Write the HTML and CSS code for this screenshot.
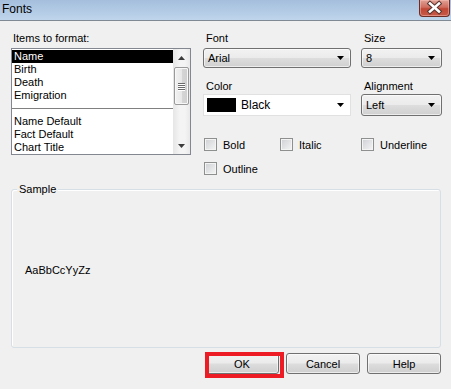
FILE: index.html
```html
<!DOCTYPE html>
<html>
<head>
    <meta charset="utf-8">
    <title>Fonts</title>
    <link rel="stylesheet" href="styles.css">
</head>
<body>
    <div class="window">
        <div class="titlebar">
            <span class="title">Fonts</span>
            <span class="close">
                <svg width="31" height="17" viewBox="0 0 31 17">
                    <path d="M11 4.5 L20 12.5 M20 4.5 L11 12.5" stroke="#5a3430" stroke-width="4.6" stroke-linecap="square"/>
                    <path d="M11 4.5 L20 12.5 M20 4.5 L11 12.5" stroke="#fff" stroke-width="2.6" stroke-linecap="square"/>
                </svg>
            </span>
        </div>

        <div class="main">
            <div class="top">
                <div class="items">
                    <div class="label">Items to format:</div>
                    <div class="listbox">
                        <ul class="list">
                            <li class="selected">Name</li>
                            <li>Birth</li>
                            <li>Death</li>
                            <li>Emigration</li>
                            <li class="sep"><span></span></li>
                            <li>Name Default</li>
                            <li>Fact Default</li>
                            <li>Chart Title</li>
                        </ul>
                        <div class="scrollbar">
                            <div class="sb-btn">
                                <svg width="7" height="4" viewBox="0 0 7 4"><path d="M3.5 0 L7 4 L0 4 Z" fill="#3c3c3c"/></svg>
                            </div>
                            <div class="sb-thumb">
                                <span></span><span></span><span></span><span></span>
                            </div>
                            <div class="sb-track"></div>
                            <div class="sb-btn">
                                <svg width="7" height="4" viewBox="0 0 7 4"><path d="M0 0 L7 0 L3.5 4 Z" fill="#3c3c3c"/></svg>
                            </div>
                        </div>
                    </div>
                </div>

                <div class="controls">
                    <div class="fields">
                        <div class="field">
                            <div class="label">Font</div>
                            <div class="combo">
                                <span>Arial</span>
                                <svg width="7" height="4" viewBox="0 0 7 4"><path d="M0 0 L7 0 L3.5 4 Z" fill="#000"/></svg>
                            </div>
                        </div>
                        <div class="field">
                            <div class="label">Size</div>
                            <div class="combo">
                                <span>8</span>
                                <svg width="7" height="4" viewBox="0 0 7 4"><path d="M0 0 L7 0 L3.5 4 Z" fill="#000"/></svg>
                            </div>
                        </div>
                        <div class="field">
                            <div class="label">Color</div>
                            <div class="combo flat">
                                <span class="swatch"></span>
                                <span class="color-name">Black</span>
                                <svg width="7" height="4" viewBox="0 0 7 4"><path d="M0 0 L7 0 L3.5 4 Z" fill="#000"/></svg>
                            </div>
                        </div>
                        <div class="field">
                            <div class="label">Alignment</div>
                            <div class="combo tall">
                                <span>Left</span>
                                <svg width="7" height="4" viewBox="0 0 7 4"><path d="M0 0 L7 0 L3.5 4 Z" fill="#000"/></svg>
                            </div>
                        </div>
                    </div>

                    <div class="checks">
                        <label class="check"><span class="box"></span>Bold</label>
                        <label class="check"><span class="box"></span>Italic</label>
                        <label class="check"><span class="box"></span>Underline</label>
                        <label class="check"><span class="box"></span>Outline</label>
                    </div>
                </div>
            </div>

            <div class="sample">
                <span class="legend">Sample</span>
                <span class="sample-text">AaBbCcYyZz</span>
            </div>

            <div class="buttons">
                <button class="btn ok">OK</button>
                <button class="btn">Cancel</button>
                <button class="btn">Help</button>
            </div>
        </div>
    </div>
</body>
</html>
```

FILE: styles.css
```css
*, *::before, *::after {
    box-sizing: border-box;
}

body {
    margin: 0;
    background: #f0f0f0;
    font-family: "Liberation Sans", Arial, sans-serif;
    font-size: 11px;
    color: #000;
}

.window {
    width: 451px;
    height: 389px;
    overflow: hidden;
}

/* title bar */
.titlebar {
    height: 21px;
    display: flex;
    justify-content: space-between;
    align-items: flex-start;
    background: linear-gradient(#a4bedc, #bfd5ec);
    border-bottom: 1px solid #808a94;
}

.title {
    font-size: 12px;
    line-height: 18px;
    padding-left: 2px;
    color: #000;
}

.close {
    width: 31px;
    height: 17px;
    margin-right: 1px;
    display: block;
    border: 1px solid #6d2d27;
    border-top: none;
    border-radius: 0 0 4px 4px;
    background: linear-gradient(#e1a196, #cf6d5f 45%, #c04634 55%, #c65a49);
    box-shadow: inset 0 0 0 1px rgba(255, 200, 190, 0.45);
    overflow: hidden;
}

.close svg {
    display: block;
    margin: -1px 0 0 -1px;
}

/* main area */
.main {
    padding: 10px 10px 0 11px;
}

.label {
    line-height: 14px;
    height: 14px;
    margin-bottom: 3px;
    padding-left: 2px;
}

.top {
    display: flex;
    height: 144px;
}

.items {
    width: 180px;
}

.listbox {
    height: 107px;
    border: 1px solid #828790;
    background: #fff;
    display: flex;
    padding-top: 1px;
}

.list {
    list-style: none;
    margin: 0;
    padding: 0;
    width: 161px;
}

.list li {
    height: 13px;
    line-height: 13px;
    padding-left: 2px;
    white-space: nowrap;
}

.list li.selected {
    background: #000;
    color: #fff;
}

.list li.sep {
    display: flex;
    align-items: center;
    padding: 0;
}

.list li.sep span {
    display: block;
    width: 100%;
    height: 1px;
    background: #808080;
}

.scrollbar {
    width: 17px;
    margin-top: -1px;
    display: flex;
    flex-direction: column;
    background: linear-gradient(90deg, #e6e6e6, #f4f4f4 40%, #f4f4f4 70%, #e9e9e9);
}

.sb-btn {
    height: 17px;
    display: flex;
    align-items: center;
    justify-content: center;
}

.sb-thumb {
    height: 38px;
    margin: 1px 1px 0 1px;
    border: 1px solid #9a9a9a;
    border-radius: 2px;
    background: linear-gradient(90deg, #f2f2f2, #e8e8e8 50%, #d6d6d6 51%, #cfcfcf);
    box-shadow: inset 0 0 0 1px #f8f8f8;
    display: flex;
    flex-direction: column;
    align-items: center;
    justify-content: center;
    gap: 1px;
}

.sb-thumb span {
    display: block;
    width: 7px;
    height: 1px;
    background: #6b6b6b;
    box-shadow: 0 1px 0 #fff;
}

.sb-track {
    flex: 1;
}

/* right column */
.controls {
    margin-left: 12px;
    width: 239px;
}

.fields {
    display: grid;
    grid-template-columns: 148px 81px;
    column-gap: 10px;
    row-gap: 11px;
}

.fields .label {
    padding-left: 3px;
}

.field:nth-child(3) .label,
.field:nth-child(4) .label {
    margin-bottom: 1px;
}

.combo {
    height: 20px;
    border: 1px solid #707070;
    border-radius: 3px;
    background: linear-gradient(#f2f2f2, #ebebeb 48%, #dddddd 52%, #d0d0d0);
    box-shadow: inset 0 0 0 1px rgba(255, 255, 255, 0.6);
    display: flex;
    align-items: center;
    padding: 0 6px 0 4px;
}

.combo span {
    flex: 1;
}

.combo.tall {
    height: 22px;
}

.combo.flat {
    height: 22px;
    border: 1px solid #e1e1e1;
    border-radius: 0;
    background: #fff;
    box-shadow: none;
    padding-left: 3px;
}

.swatch {
    flex: none !important;
    width: 29px;
    height: 14px;
    background: #000;
    margin-right: 5px;
}

.color-name {
    font-size: 12px;
}

.checks {
    display: grid;
    grid-template-columns: 76px 81px auto;
    row-gap: 11px;
    margin-top: 22px;
    padding-left: 1px;
}

.check {
    display: flex;
    align-items: center;
    height: 13px;
    gap: 6px;
}

.box {
    width: 13px;
    height: 13px;
    border: 1px solid #8e8f8f;
    background: linear-gradient(135deg, #cdd0d4, #f5f5f5);
    box-shadow: inset 0 0 0 1px #f4f4f4;
}

/* sample group */
.sample {
    position: relative;
    margin-top: 14px;
    height: 159px;
    border: 1px solid #d5dfe5;
    border-radius: 3px;
    box-shadow: inset 1px 1px 0 #fff;
    display: flex;
    align-items: center;
    padding-left: 13px;
}

.legend {
    position: absolute;
    top: -8px;
    left: 5px;
    padding: 0 2px;
    line-height: 14px;
    background: #f0f0f0;
}

.sample-text {
    padding-top: 2px;
}

/* buttons */
.buttons {
    display: flex;
    justify-content: flex-end;
    gap: 7px;
    margin-top: 5px;
}

.btn {
    width: 74px;
    height: 21px;
    border: 1px solid #707070;
    border-radius: 3px;
    background: linear-gradient(#f2f2f2, #ebebeb 48%, #dddddd 52%, #cfcfcf);
    box-shadow: inset 0 0 0 1px rgba(255, 255, 255, 0.6);
    font-family: "Liberation Sans", Arial, sans-serif;
    font-size: 11px;
    color: #000;
    padding: 0;
}

.ok {
    position: relative;
}

.ok::after {
    content: "";
    position: absolute;
    left: -1px;
    top: -2px;
    width: 79px;
    height: 26px;
    border: 4px solid #ed1c24;
}
```
